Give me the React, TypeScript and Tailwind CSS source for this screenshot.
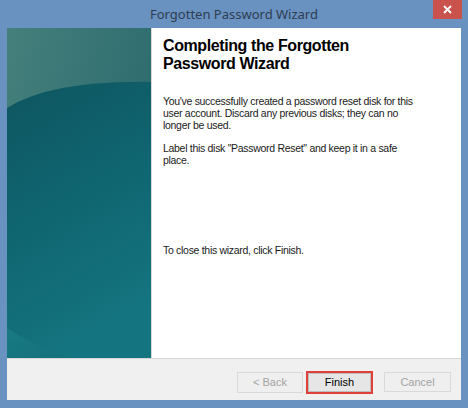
import React from "react";

function SidePanel() {
  return (
    <svg width="144" height="330" viewBox="0 0 144 330" className="block">
      <defs>
        <linearGradient id="top" x1="0" y1="0" x2="1" y2="0.6">
          <stop offset="0" stopColor="#45807c" />
          <stop offset="1" stopColor="#2a686c" />
        </linearGradient>
        <linearGradient id="low" x1="0" y1="0" x2="0.3" y2="1">
          <stop offset="0" stopColor="#0e5560" />
          <stop offset="0.5" stopColor="#0f6570" />
          <stop offset="1" stopColor="#14747f" />
        </linearGradient>
        <linearGradient id="low2" x1="0" y1="0" x2="1" y2="1">
          <stop offset="0" stopColor="#1c8088" />
          <stop offset="1" stopColor="#136f7b" />
        </linearGradient>
      </defs>
      <rect width="144" height="330" fill="url(#top)" />
      <path d="M0 80 Q45 52 144 54 L144 330 L0 330 Z" fill="url(#low)" />
      <path d="M0 300 Q30 320 60 330 L0 330 Z" fill="url(#low2)" opacity="0.7" />
    </svg>
  );
}

export default function App() {
  return (
    <div className="w-[468px] h-[408px] bg-[#6a92c0] flex flex-col" style={{ fontFamily: "'Liberation Sans', Arial, sans-serif" }}>
      <div className="h-[28px] relative flex items-center justify-center">
        <span className="text-[13px] text-[#2d3d52] pt-[1px]" style={{ fontFamily: "'Noto Sans', 'Open Sans', sans-serif" }}>
          Forgotten Password Wizard
        </span>
        <div className="absolute right-[6px] top-0 w-[29px] h-[19px] bg-[#c9524c] flex items-center justify-center">
          <svg width="9" height="9" viewBox="0 0 9 9">
            <path d="M1 1 L8 8 M8 1 L1 8" stroke="#ffffff" strokeWidth="1.8" />
          </svg>
        </div>
      </div>
      <div className="mx-[7px] mb-[8px] flex-1 flex flex-col">
        <div className="h-[330px] flex">
          <div className="w-[144px] h-[330px] shrink-0">
            <SidePanel />
          </div>
          <div className="flex-1 bg-white border-l border-[#d8d8d8] pl-[11px] pt-[9px] flex flex-col">
            <h1 className="text-[16px] font-bold leading-[18px] text-black tracking-[-0.4px]">
              Completing the Forgotten
              <br />
              Password Wizard
            </h1>
            <p className="mt-[22px] text-[10.5px] leading-[12px] text-[#1a1a1a] tracking-[-0.3px]">
              You've successfully created a password reset disk for this
              <br />
              user account. Discard any previous disks; they can no
              <br />
              longer be used.
            </p>
            <p className="mt-[11px] text-[10.5px] leading-[12px] text-[#1a1a1a] tracking-[-0.3px]">
              Label this disk "Password Reset" and keep it in a safe
              <br />
              place.
            </p>
            <p className="mt-[78px] text-[10.5px] leading-[12px] text-[#1a1a1a] tracking-[-0.3px]">
              To close this wizard, click Finish.
            </p>
          </div>
        </div>
        <div className="flex-1 bg-[#f0f0f0] border-t border-[#d6d6d6] flex items-start justify-end pr-[10px] pt-[12px]">
          <div className="w-[66px] h-[21px] mt-[1px] border border-[#d9d9d9] bg-[#efefef] flex items-center justify-center text-[11px] text-[#a3a3a3]">
            &lt; Back
          </div>
          <div className="ml-[3px] w-[67px] h-[23px] border-2 border-[#e0403a] flex">
            <div className="flex-1 bg-[#e6e6e6] border border-[#bdbdbd] flex items-center justify-center text-[11px] text-black">
              Finish
            </div>
          </div>
          <div className="ml-[11px] w-[67px] h-[20px] mt-[1px] border border-[#d9d9d9] bg-[#efefef] flex items-center justify-center text-[11px] text-[#a3a3a3]">
            Cancel
          </div>
        </div>
      </div>
    </div>
  );
}
